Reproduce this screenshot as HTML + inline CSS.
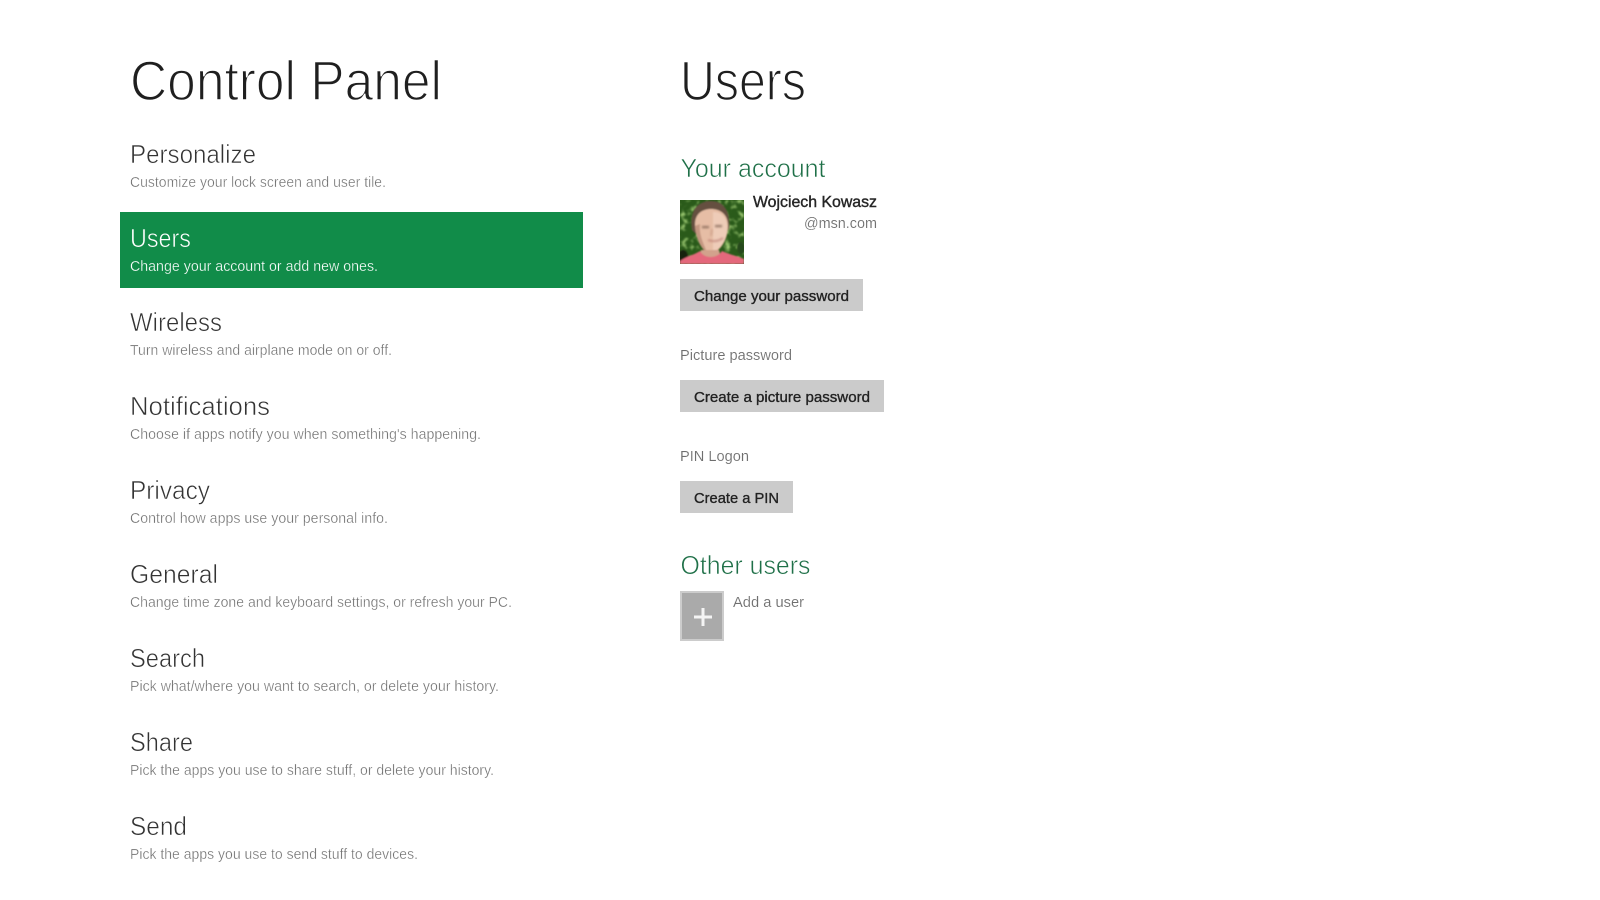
<!DOCTYPE html>
<html lang="en">
<head>
<meta charset="utf-8">
<title>Control Panel</title>
<style>
html,body{margin:0;padding:0;background:#fff;width:1600px;height:900px;overflow:hidden}
svg{display:block}
text{font-family:"Liberation Sans",sans-serif}
.t{font-size:56px;fill:#1f1f1f;stroke:#fff;stroke-width:1.5}
.h{font-size:26px;fill:#333;stroke:#fff;stroke-width:.6}
.s{font-size:14.5px;fill:#6f6f6f;stroke:#fff;stroke-width:.3}
.g{font-size:26px;fill:#1f7048;stroke:#fff;stroke-width:.6}
.b{font-size:15px;fill:#222;stroke:#222;stroke-width:.35}
.l{font-size:15px;fill:#6e6e6e;stroke:#fff;stroke-width:.12}
.hw{fill:#fff;stroke:#118c49;stroke-width:.6}
.sw{fill:#fff;stroke:#118c49;stroke-width:.25}
</style>
</head>
<body>
<svg width="1600" height="900" viewBox="0 0 1600 900" xmlns="http://www.w3.org/2000/svg">
<defs>
<filter id="bl" x="-30%" y="-100%" width="160%" height="300%"><feGaussianBlur stdDeviation="1"/></filter>
<filter id="bs" x="-20%" y="-20%" width="140%" height="140%"><feGaussianBlur stdDeviation=".8"/></filter>
<filter id="leaf" x="0" y="0" width="100%" height="100%">
<feTurbulence type="fractalNoise" baseFrequency=".16" numOctaves="2" seed="11"/>
<feColorMatrix type="matrix" values="0 0 0 0 .36  0 0 0 0 .62  0 0 0 0 .18  3 0 0 0 -1.5"/>
<feGaussianBlur stdDeviation=".7"/>
</filter>
<clipPath id="pc"><rect x="680" y="200" width="64" height="64"/></clipPath>
</defs>
<rect width="1600" height="900" fill="#fff"/>

<text class="t" x="130" y="100" textLength="312" lengthAdjust="spacingAndGlyphs">Control Panel</text>
<text class="t" x="680" y="100" textLength="126" lengthAdjust="spacingAndGlyphs">Users</text>

<rect x="120" y="212" width="463" height="76" fill="#118c49"/>

<text class="h" x="130" y="163" textLength="126" lengthAdjust="spacingAndGlyphs">Personalize</text>
<text class="s" x="130" y="187" textLength="256" lengthAdjust="spacingAndGlyphs">Customize your lock screen and user tile.</text>

<text class="h hw" x="130" y="247" textLength="61" lengthAdjust="spacingAndGlyphs">Users</text>
<text class="s sw" x="130" y="271" textLength="248" lengthAdjust="spacingAndGlyphs">Change your account or add new ones.</text>

<text class="h" x="130" y="331" textLength="92" lengthAdjust="spacingAndGlyphs">Wireless</text>
<text class="s" x="130" y="355" textLength="262" lengthAdjust="spacingAndGlyphs">Turn wireless and airplane mode on or off.</text>

<text class="h" x="130" y="415" textLength="140" lengthAdjust="spacingAndGlyphs">Notifications</text>
<text class="s" x="130" y="439" textLength="351" lengthAdjust="spacingAndGlyphs">Choose if apps notify you when something's happening.</text>

<text class="h" x="130" y="499" textLength="80" lengthAdjust="spacingAndGlyphs">Privacy</text>
<text class="s" x="130" y="523" textLength="258" lengthAdjust="spacingAndGlyphs">Control how apps use your personal info.</text>

<text class="h" x="130" y="583" textLength="88" lengthAdjust="spacingAndGlyphs">General</text>
<text class="s" x="130" y="607" textLength="382" lengthAdjust="spacingAndGlyphs">Change time zone and keyboard settings, or refresh your PC.</text>

<text class="h" x="130" y="667" textLength="75" lengthAdjust="spacingAndGlyphs">Search</text>
<text class="s" x="130" y="691" textLength="369" lengthAdjust="spacingAndGlyphs">Pick what/where you want to search, or delete your history.</text>

<text class="h" x="130" y="751" textLength="63" lengthAdjust="spacingAndGlyphs">Share</text>
<text class="s" x="130" y="775" textLength="364" lengthAdjust="spacingAndGlyphs">Pick the apps you use to share stuff, or delete your history.</text>

<text class="h" x="130" y="835" textLength="57" lengthAdjust="spacingAndGlyphs">Send</text>
<text class="s" x="130" y="859" textLength="288" lengthAdjust="spacingAndGlyphs">Pick the apps you use to send stuff to devices.</text>

<text class="g" x="680.5" y="177" textLength="145" lengthAdjust="spacingAndGlyphs">Your account</text>

<g clip-path="url(#pc)">
<rect x="680" y="200" width="64" height="64" fill="#2a5a1a"/>
<rect x="680" y="200" width="64" height="64" filter="url(#leaf)"/>
<g filter="url(#bs)">
<ellipse cx="683" cy="257" rx="5" ry="7" fill="#16240e"/>
<ellipse cx="741" cy="248" rx="4" ry="6" fill="#274a1a"/>
<path d="M692 230C689 210 698 201 711 201C723 201 731 210 729 230L726 228C725 219 719 214 710 214C702 214 697 219 696 234Z" fill="#65503f"/>
<path d="M695 224C695 214 702 209 711 209C720 209 728 214 728 226C728 240 720 252 711 253C702 252 695 238 695 224Z" fill="#e6bda5"/>
<path d="M713 212C722 212 727 218 727 227C727 239 720 250 713 251Z" fill="#f0d2bf" opacity=".75"/>
<path d="M695 226C696 238 701 250 707 252C702 241 699 233 700 224Z" fill="#bb8d78" opacity=".8"/>
<path d="M701 250L719 250L721 258L699 258Z" fill="#d2a28c"/>
<path d="M680 264V261C687 256 694 255 700 251C704 259 717 259 722 251C728 254 737 256 744 259V264Z" fill="#e4687b"/>
</g>
<g filter="url(#bl)" opacity=".75">
<rect x="702" y="226" width="7" height="2.2" fill="#7a5d4e"/>
<rect x="715" y="225" width="7" height="2.2" fill="#7a5d4e"/>
<path d="M708 240Q716 243 723 238" stroke="#b5726a" stroke-width="1.6" fill="none"/>
<path d="M712 229L711 236" stroke="#c49680" stroke-width="1.6" fill="none"/>
</g>
</g>

<text x="753" y="207" font-size="16" style="fill:#262626;stroke:#262626;stroke-width:.4" textLength="124" lengthAdjust="spacingAndGlyphs">Wojciech Kowasz</text>
<text class="l" x="804" y="228" textLength="73" lengthAdjust="spacingAndGlyphs">@msn.com</text>

<rect x="680" y="279" width="183" height="32" fill="#cbcbcb"/>
<text class="b" x="694" y="301" textLength="155" lengthAdjust="spacingAndGlyphs">Change your password</text>

<text class="l" x="680" y="360" textLength="112" lengthAdjust="spacingAndGlyphs">Picture password</text>
<rect x="680" y="380" width="204" height="32" fill="#cbcbcb"/>
<text class="b" x="694" y="402" textLength="176" lengthAdjust="spacingAndGlyphs">Create a picture password</text>

<text class="l" x="680" y="461" textLength="69" lengthAdjust="spacingAndGlyphs">PIN Logon</text>
<rect x="680" y="481" width="113" height="32" fill="#cbcbcb"/>
<text class="b" x="694" y="503" textLength="85" lengthAdjust="spacingAndGlyphs">Create a PIN</text>

<text class="g" x="680.5" y="574" textLength="130" lengthAdjust="spacingAndGlyphs">Other users</text>

<rect x="680" y="591" width="44" height="50" fill="#cccccc"/>
<rect x="682" y="593" width="40" height="46" fill="#aaaaaa"/>
<path d="M703 608V626M694 617H712" stroke="#f4f4f4" stroke-width="3" fill="none"/>
<text class="l" x="733" y="607" textLength="71" lengthAdjust="spacingAndGlyphs">Add a user</text>
</svg>
</body>
</html>
